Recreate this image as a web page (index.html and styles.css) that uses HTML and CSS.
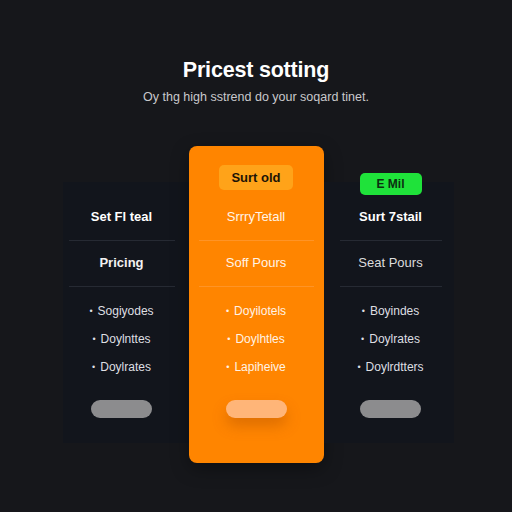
FILE: index.html
```html
<!DOCTYPE html>
<html>
<head>
<meta charset="utf-8">
<link rel="stylesheet" href="styles.css">
</head>
<body>
<main class="page">
  <header class="intro">
    <h1 class="title">Pricest sotting</h1>
    <p class="subtitle">Oy thg high sstrend do your soqard tinet.</p>
  </header>
  <section class="plans">
    <div class="plan plan-left">
      <div class="row row-head">Set Fl teal</div>
      <div class="row row-price">Pricing</div>
      <ul class="features">
        <li>Sogiyodes</li>
        <li>Doylnttes</li>
        <li>Doylrates</li>
      </ul>
      <div class="btn btn-gray"></div>
    </div>
    <div class="plan plan-featured">
      <div class="badge badge-orange">Surt old</div>
      <div class="row row-head">SrrryTetall</div>
      <div class="row row-price">Soff Pours</div>
      <ul class="features">
        <li>Doyilotels</li>
        <li>Doylhtles</li>
        <li>Lapiheive</li>
      </ul>
      <div class="btn btn-light"></div>
    </div>
    <div class="plan plan-right">
      <div class="badge badge-green">E Mil</div>
      <div class="row row-head">Surt 7stail</div>
      <div class="row row-price">Seat Pours</div>
      <ul class="features">
        <li>Boyindes</li>
        <li>Doylrates</li>
        <li>Doylrdtters</li>
      </ul>
      <div class="btn btn-gray"></div>
    </div>
  </section>
</main>
</body>
</html>
```

FILE: styles.css
```css
* { box-sizing: border-box; }
html, body { margin: 0; padding: 0; }
body {
  background: #16171b;
  font-family: "Liberation Sans", Arial, sans-serif;
  color: #fff;
  width: 512px;
  height: 512px;
  overflow: hidden;
}
.page {
  display: flex;
  flex-direction: column;
  align-items: center;
  padding-top: 57px;
}
.intro { text-align: center; }
.title {
  margin: 0;
  font-size: 21.5px;
  font-weight: 700;
  line-height: 26px;
  letter-spacing: -0.2px;
}
.subtitle {
  margin: 6px 0 0;
  font-size: 12.5px;
  line-height: 16px;
  color: #c9c9cc;
}
.plans {
  display: flex;
  align-items: flex-start;
  margin-top: 41px;
  margin-left: 4px;
}
.plan {
  display: flex;
  flex-direction: column;
  align-items: center;
}
.plan-left, .plan-right {
  background: #12151c;
  margin-top: 36px;
  height: 261px;
  padding-top: 25px;
}
.plan-left { width: 126px; padding-left: 6px; padding-right: 14px; }
.plan-right { width: 130px; padding-left: 16px; padding-right: 12px; }
.plan-featured {
  width: 135px;
  height: 317px;
  background: #ff8500;
  border-radius: 8px;
  padding: 19px 10px 0;
  box-shadow: 0 6px 18px rgba(0,0,0,0.35);
}
.badge {
  font-weight: 700;
  font-size: 13px;
  border-radius: 5px;
  display: flex;
  align-items: center;
  justify-content: center;
}
.badge-orange {
  width: 74px;
  height: 25px;
  background: #ffa319;
  color: #1c1406;
  margin-bottom: 17px;
}
.badge-green {
  width: 62px;
  height: 22px;
  background: #1fe23a;
  color: #0c2e10;
  font-size: 12px;
  margin-top: -34px;
  margin-bottom: 12px;
}
.row {
  width: 100%;
  text-align: center;
  font-size: 13px;
  line-height: 20px;
}
.row-head {
  font-weight: 700;
  padding-bottom: 13px;
  border-bottom: 1px solid #262a33;
}
.row-price {
  padding: 12px 0 13px;
  border-bottom: 1px solid #262a33;
  color: #f2f2f2;
}
.plan-left .row-price { font-weight: 700; }
.plan-right .row-price { color: #dcdcdc; }
.plan-featured .row-head,
.plan-featured .row-price {
  border-bottom-color: #ff9426;
  color: #fff4e8;
}
.plan-featured .row-head { font-weight: 400; }
.features {
  list-style: none;
  margin: 0;
  padding: 10px 0 0;
  width: 100%;
}
.features li {
  line-height: 28px;
  font-size: 12px;
  color: #dedfe2;
  text-align: center;
}
.features li::before {
  content: "•";
  font-size: 9px;
  margin-right: 5px;
  vertical-align: 1px;
}
.plan-featured .features li { color: #fff3e6; }
.btn {
  width: 61px;
  height: 18px;
  border-radius: 9px;
  margin-top: 19px;
}
.btn-gray { background: #8c8c8e; }
.btn-light {
  background: #ffb578;
  box-shadow: 0 8px 14px rgba(160,70,0,0.35);
}
```
